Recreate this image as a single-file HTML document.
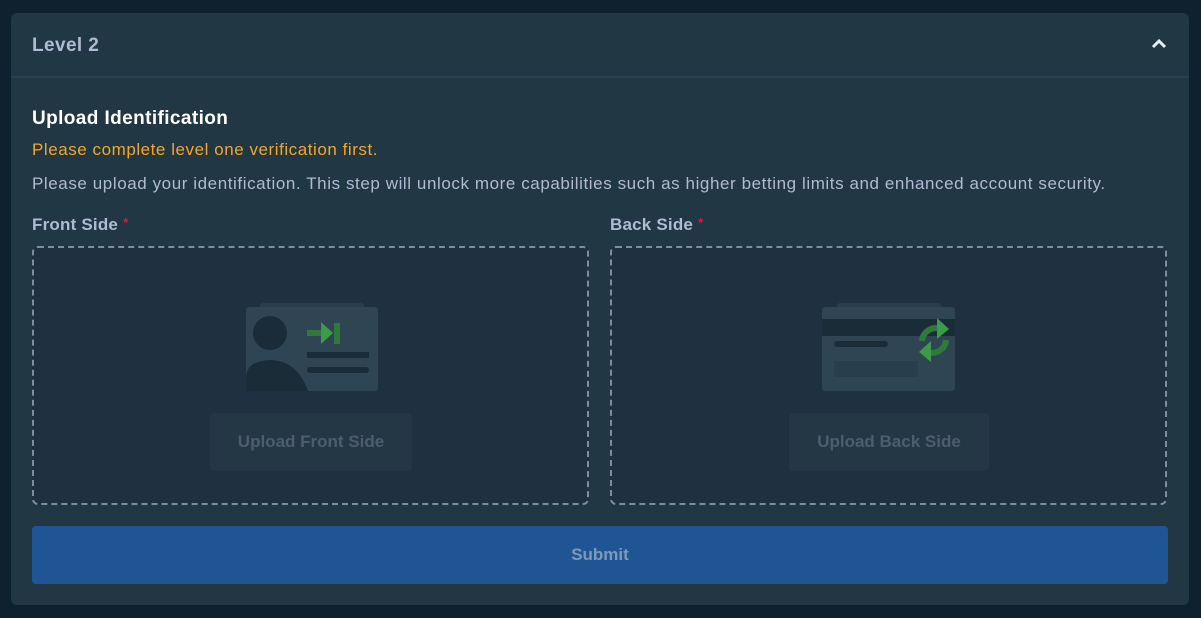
<!DOCTYPE html>
<html><head><style>
*{box-sizing:border-box;margin:0;padding:0}
body{width:1201px;height:618px;background:#0f212e;font-family:"Liberation Sans",sans-serif;overflow:hidden;position:relative}
.panel{position:absolute;left:11px;top:13px;width:1178px;height:592px;background:#213743;border-radius:6px}
.hdr{height:65px;border-bottom:2px solid #2a4050;position:relative}
.hdr span{position:absolute;left:21px;top:22px;font-size:19px;font-weight:bold;color:#b1bad3;letter-spacing:0.4px}
.chev{position:absolute;right:22px;top:25px}
.t{position:absolute;left:21px;font-size:17px}
.h{top:95px;font-size:19px;font-weight:bold;color:#fff;letter-spacing:0.4px}
.w{top:127px;color:#f5a623;letter-spacing:0.55px}
.d{top:161px;color:#b1bad3;letter-spacing:0.58px}
.lbl{position:absolute;top:202px;font-size:17px;font-weight:bold;color:#b1bad3;letter-spacing:0.2px}
.lbl i{color:#e9113c;font-style:normal;font-size:13px;vertical-align:top;margin-left:5px}
.dz{position:absolute;top:233px;width:557px;height:259px;border:2px dashed #7f8d9c;border-radius:6px;background:#1f3140}
.btn{position:absolute;top:165px;width:202px;height:58px;background:#243745;border-radius:4px;color:#4b5e6e;font-size:17px;font-weight:bold;text-align:center;line-height:58px}
.sub{position:absolute;left:21px;top:513px;width:1136px;height:58px;background:#1f5594;border-radius:4px;color:#7e9ab8;font-weight:bold;font-size:17px;text-align:center;line-height:58px}
</style></head><body>
<div class="panel">
<div class="hdr"><span>Level 2</span>
<svg class="chev" width="16" height="12" viewBox="0 0 16 12"><path d="M2 9 L8 3 L14 9" stroke="#e6ecf5" stroke-width="3" fill="none"/></svg></div>
<div class="t h">Upload Identification</div>
<div class="t w">Please complete level one verification first.</div>
<div class="t d">Please upload your identification. This step will unlock more capabilities such as higher betting limits and enhanced account security.</div>
<div class="lbl" style="left:21px">Front Side<i>*</i></div>
<div class="lbl" style="left:599px">Back Side<i>*</i></div>
<div class="dz" style="left:21px">
<svg style="position:absolute;left:211px;top:55px" width="134" height="90" viewBox="0 0 134 90">
<rect x="15" y="0" width="104" height="6" rx="3" fill="#2a3d4b"/>
<rect x="1" y="4" width="132" height="84" rx="3" fill="#2f4553"/>
<circle cx="25" cy="30" r="17" fill="#1a2c38"/>
<path d="M1 88 V75 Q1 58 25 57 Q52 57 63 88 Z" fill="#1a2c38"/>
<rect x="62" y="49" width="62" height="6" fill="#1a2c38"/>
<rect x="62" y="64" width="62" height="6" rx="3" fill="#1a2c38"/>
<rect x="62" y="27" width="16" height="6" fill="#2f7a3a"/>
<path d="M76 19 L88 30 L76 41 Z" fill="#3d9a48"/>
<rect x="89" y="20" width="6" height="21" fill="#2f7a3a"/>
</svg>
<div class="btn" style="left:176px">Upload Front Side</div>
</div>
<div class="dz" style="left:599px">
<svg style="position:absolute;left:210px;top:55px" width="134" height="90" viewBox="0 0 134 90">
<rect x="15" y="0" width="104" height="6" rx="3" fill="#2a3d4b"/>
<rect x="0" y="4" width="133" height="84" rx="3" fill="#2f4553"/>
<rect x="0" y="16" width="133" height="17" fill="#1a2c38"/>
<rect x="12" y="38" width="54" height="6" rx="3" fill="#1a2c38"/>
<rect x="12" y="58" width="84" height="16" fill="#293e4c"/>
<path d="M100 38 A14 14 0 0 1 119 26" stroke="#2f7a3a" stroke-width="6" fill="none"/>
<path d="M115 15 L127 26 L115 36 Z" fill="#3d9a48"/>
<path d="M124 37 A14 14 0 0 1 105 49" stroke="#2f7a3a" stroke-width="6" fill="none"/>
<path d="M109 38 L97 49 L109 59 Z" fill="#3d9a48"/>
</svg>
<div class="btn" style="left:177px;width:200px">Upload Back Side</div>
</div>
<div class="sub">Submit</div>
</div>
</body></html>
